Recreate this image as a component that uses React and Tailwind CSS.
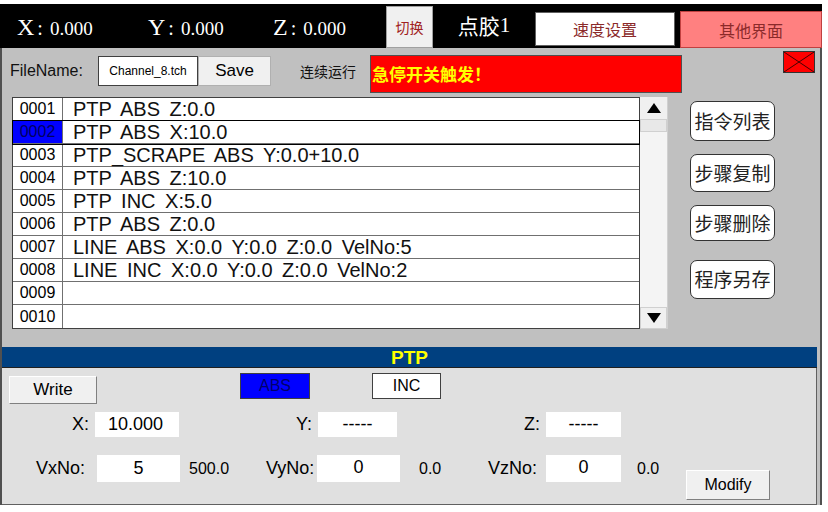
import React from 'react'

const rows = [
  { no: '0001', text: 'PTP ABS Z:0.0' },
  { no: '0002', text: 'PTP ABS X:10.0', sel: true },
  { no: '0003', text: 'PTP_SCRAPE ABS Y:0.0+10.0' },
  { no: '0004', text: 'PTP ABS Z:10.0' },
  { no: '0005', text: 'PTP INC X:5.0' },
  { no: '0006', text: 'PTP ABS Z:0.0' },
  { no: '0007', text: 'LINE ABS X:0.0 Y:0.0 Z:0.0 VelNo:5' },
  { no: '0008', text: 'LINE INC X:0.0 Y:0.0 Z:0.0 VelNo:2' },
  { no: '0009', text: '' },
  { no: '0010', text: '' },
]

const cjk = "font-['Noto_Sans_CJK_SC',sans-serif]"
const serif = "font-['Liberation_Serif','Noto_Sans_CJK_SC',serif]"

function Coord({ axis, w }) {
  return (
    <div className={`flex items-baseline text-white ${serif}`} style={{ width: w }}>
      <span className="text-[24px]">{axis}</span>
      <span className="text-[20px] ml-[3px] mr-[7px]">:</span>
      <span className="text-[19px]">0.000</span>
    </div>
  )
}

function SideBtn({ label, cls }) {
  return (
    <button className={`w-[85px] px-0 whitespace-nowrap rounded-[7px] border border-[#333] bg-white text-[19px] text-[#222] flex items-center justify-center ${cjk} ${cls}`}>
      {label}
    </button>
  )
}

export default function App() {
  return (
    <div className="w-[828px] h-[512px] bg-white overflow-hidden font-['Liberation_Sans',Arial,sans-serif] text-black">
      {/* top bar */}
      <div className="mt-[4px] w-[822px] h-[44px] bg-black flex items-start">
        <div className="w-[386px] h-[44px] flex items-center pl-[17px] pt-[1px]">
          <Coord axis="X" w={131} />
          <Coord axis="Y" w={125} />
          <Coord axis="Z" w={100} />
        </div>
        <button className={`mt-[2px] w-[47px] h-[42px] bg-[#f0f0f0] border border-[#a0a0a0] text-[14px] text-[#a02020] ${cjk}`}>切换</button>
        <div className={`w-[102px] h-[44px] flex items-center justify-center text-white text-[21px] ${cjk}`}>
          点胶<span className={serif}>1</span>
        </div>
        <button className={`mt-[8px] w-[140px] h-[34px] bg-white border border-[#606060] text-[16px] text-[#8b2a2a] ${cjk}`}>速度设置</button>
        <button className={`ml-[5px] mt-[7px] w-[142px] h-[37px] bg-[#ff8080] border border-[#c04040] text-[16px] text-[#8b2a2a] ${cjk}`}>其他界面</button>
      </div>

      {/* main body */}
      <div className="w-[822px] border-l-2 border-r-2 border-[#505050] bg-[#c0c0c0]">
        <div className="h-[299px]">
          {/* file row */}
          <div className="pt-[7px] pl-[8px] flex items-start h-[48px]">
            <div className="w-[88px] h-[30px] mt-[1px] flex items-center text-[16px] text-[#111]">FileName:</div>
            <div className="w-[100px] h-[30px] mt-[1px] bg-white border border-[#404040] flex items-center justify-center text-[12px]">Channel_8.tch</div>
            <button className="w-[73px] h-[30px] mt-[1px] bg-[#f0f0f0] border border-[#b0b0b0] text-[17px]">Save</button>
            <div className={`ml-[29px] w-[70px] h-[32px] flex items-center text-[14px] text-[#111] ${cjk}`}>连续运行</div>
            <div className={`w-[312px] h-[38px] bg-[#ff0000] border border-[#505050] flex items-center pl-[1px] text-[17px] font-bold text-[#ffff00] ${cjk}`}>急停开关触发！</div>
            <div className="ml-[101px] -mt-[4px] w-[32px] h-[22px] bg-[#ff0000] border border-[#333]">
              <svg width="30" height="20" viewBox="0 0 30 20">
                <line x1="0" y1="0" x2="30" y2="20" stroke="#400" strokeWidth="1" />
                <line x1="30" y1="0" x2="0" y2="20" stroke="#400" strokeWidth="1" />
              </svg>
            </div>
          </div>

          {/* table area */}
          <div className="mt-[1px] pl-[10px] flex items-start">
            <div className="w-[628px] border border-[#404040] bg-white">
              {rows.map((r) => (
                <div key={r.no} className={`h-[23px] flex border-b border-[#707070] last:border-b-0 ${r.sel ? 'outline outline-1 outline-black' : ''}`}>
                  <div className={`w-[50px] border-r border-[#707070] flex items-center justify-center text-[16px] ${r.sel ? 'bg-[#0000ff] text-[#000060]' : ''}`}>{r.no}</div>
                  <div className="flex-1 pl-[10px] flex items-center text-[20px] leading-none [word-spacing:4px] text-[#111]">{r.text}</div>
                </div>
              ))}
            </div>
            <div className="w-[28px] h-[232px] bg-[#f4f4f4] flex flex-col border-r border-[#d0d0d0]">
              <div className="h-[22px] bg-[#f0f0f0] flex items-center justify-center">
                <svg width="14" height="10" viewBox="0 0 14 10"><polygon points="7,0 14,10 0,10" fill="#000" /></svg>
              </div>
              <div className="h-[13px] bg-[#e8e8e8] border border-[#d0d0d0]" />
              <div className="flex-1" />
              <div className="h-[22px] bg-[#f0f0f0] border border-[#d0d0d0] flex items-center justify-center">
                <svg width="14" height="10" viewBox="0 0 14 10"><polygon points="0,0 14,0 7,10" fill="#000" /></svg>
              </div>
            </div>
            <div className="ml-[22px] flex flex-col">
              <SideBtn label="指令列表" cls="mt-[4px] h-[40px]" />
              <SideBtn label="步骤复制" cls="mt-[13px] h-[38px]" />
              <SideBtn label="步骤删除" cls="mt-[13px] h-[36px]" />
              <SideBtn label="程序另存" cls="mt-[19px] h-[39px]" />
            </div>
          </div>
        </div>

        {/* PTP title bar */}
        <div className="mr-[3px] h-[21px] bg-[#004080] border-b border-[#202020] flex items-center justify-center text-[19px] font-bold text-[#ffff00] leading-none">
          PTP
        </div>

        {/* bottom panel */}
        <div className="mr-[3px] h-[137px] bg-[#e0e0e0] border-r border-b border-[#606060]">
          <div className="pt-[5px] flex items-start">
            <button className="ml-[7px] mt-[3px] w-[88px] h-[28px] bg-[#f0f0f0] border border-t-white border-l-white border-b-[#808080] border-r-[#808080] text-[17px]">Write</button>
            <div className="ml-[143px] w-[70px] h-[26px] bg-[#0000ff] border border-[#404040] flex items-center justify-center text-[16px] text-[#00006a] leading-none">ABS</div>
            <div className="ml-[62px] w-[69px] h-[26px] bg-white border border-[#404040] flex items-center justify-center text-[16px] leading-none">INC</div>
          </div>

          <div className="mt-[8px] flex items-center h-[25px] text-[18px]">
            <div className="w-[87px] text-right">X:</div>
            <div className="ml-[6px] w-[84px] h-[25px] bg-white flex items-center pl-[13px]">10.000</div>
            <div className="w-[133px] text-right">Y:</div>
            <div className="ml-[6px] w-[79px] h-[25px] bg-white flex items-center justify-center">-----</div>
            <div className="w-[143px] text-right">Z:</div>
            <div className="ml-[6px] w-[75px] h-[25px] bg-white flex items-center justify-center">-----</div>
          </div>

          <div className="mt-[18px] flex items-start text-[18px]">
            <div className="w-[83px] h-[27px] flex items-center justify-end">VxNo:</div>
            <div className="ml-[12px] w-[83px] h-[27px] bg-white flex items-center justify-center">5</div>
            <div className="w-[86px] h-[27px] pl-[9px] flex items-center text-[16px]">500.0</div>
            <div className="w-[47px] h-[27px] flex items-center">VyNo:</div>
            <div className="ml-[4px] w-[83px] h-[27px] bg-white flex items-center justify-center pb-[3px]">0</div>
            <div className="w-[88px] h-[27px] pl-[19px] flex items-center text-[16px]">0.0</div>
            <div className="w-[49px] h-[27px] flex items-center">VzNo:</div>
            <div className="ml-[9px] w-[75px] h-[27px] bg-white flex items-center justify-center pb-[3px]">0</div>
            <div className="w-[65px] h-[27px] pl-[16px] flex items-center text-[16px]">0.0</div>
            <button className="mt-[15px] w-[84px] h-[30px] bg-[#f0f0f0] border border-t-white border-l-white border-b-[#808080] border-r-[#808080] text-[16px]">Modify</button>
          </div>
        </div>
      </div>
    </div>
  )
}
